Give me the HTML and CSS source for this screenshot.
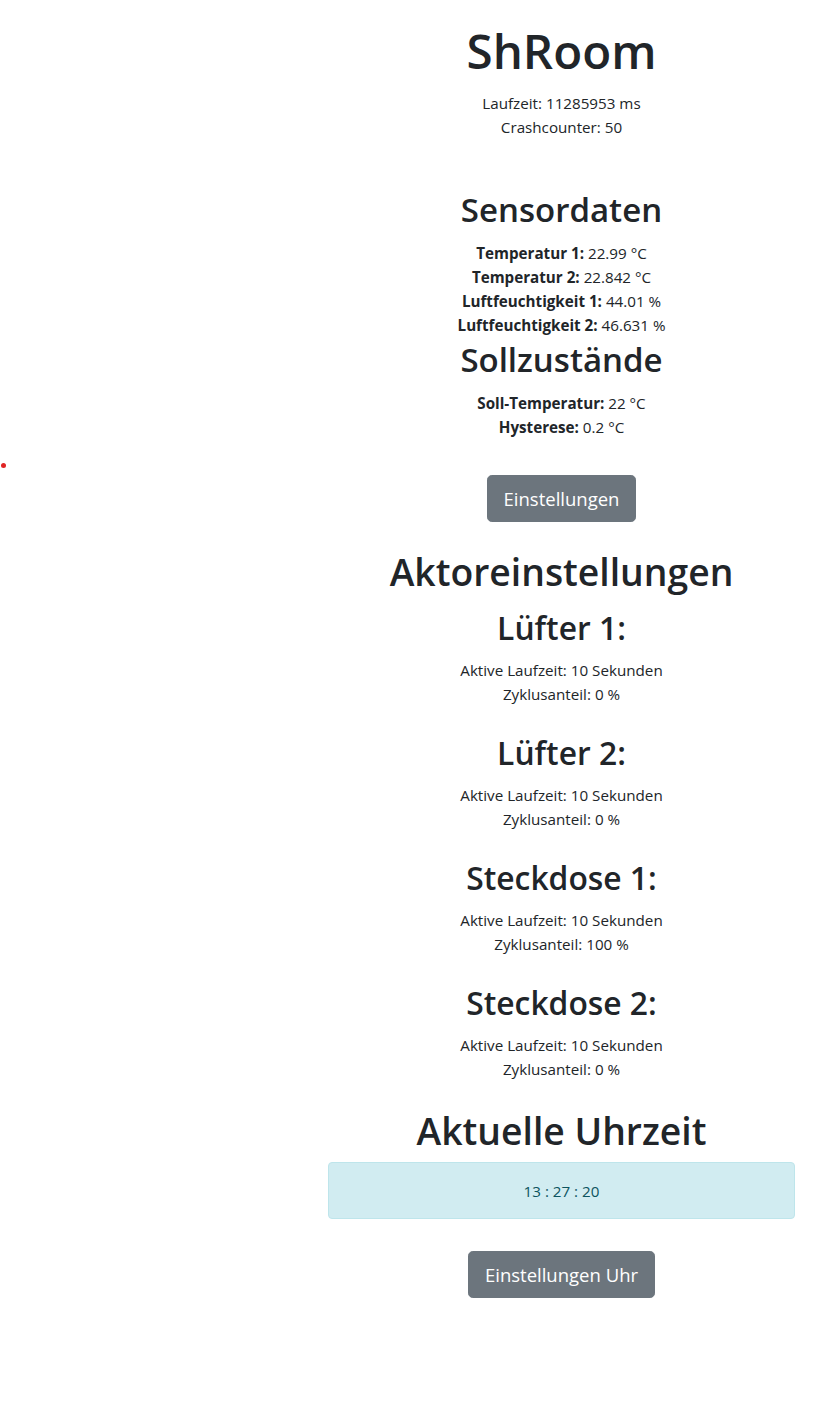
FILE: index.html
```html
<!DOCTYPE html>
<html lang="de">
<head>
<meta charset="utf-8">
<title>ShRoom</title>
<link rel="stylesheet" href="styles.css">
</head>
<body>
<span class="dot"></span>
<main class="main">
  <h1 class="title">ShRoom</h1>
  <p class="lines">Laufzeit: 11285953 ms<br>Crashcounter: 50</p>

  <h2 class="section sensor-head">Sensordaten</h2>
  <p class="lines">
    <b>Temperatur 1:</b> 22.99 °C<br>
    <b>Temperatur 2:</b> 22.842 °C<br>
    <b>Luftfeuchtigkeit 1:</b> 44.01 %<br>
    <b>Luftfeuchtigkeit 2:</b> 46.631 %
  </p>

  <h2 class="section soll-head">Sollzustände</h2>
  <p class="lines">
    <b>Soll-Temperatur:</b> 22 °C<br>
    <b>Hysterese:</b> 0.2 °C
  </p>

  <div class="btn-row first"><button class="btn">Einstellungen</button></div>

  <h2 class="big akt-head">Aktoreinstellungen</h2>

  <section class="actor first-actor">
    <h3 class="actor-head">Lüfter 1:</h3>
    <p class="lines">Aktive Laufzeit: 10 Sekunden<br>Zyklusanteil: 0 %</p>
  </section>
  <section class="actor">
    <h3 class="actor-head">Lüfter 2:</h3>
    <p class="lines">Aktive Laufzeit: 10 Sekunden<br>Zyklusanteil: 0 %</p>
  </section>
  <section class="actor">
    <h3 class="actor-head">Steckdose 1:</h3>
    <p class="lines">Aktive Laufzeit: 10 Sekunden<br>Zyklusanteil: 100 %</p>
  </section>
  <section class="actor">
    <h3 class="actor-head">Steckdose 2:</h3>
    <p class="lines">Aktive Laufzeit: 10 Sekunden<br>Zyklusanteil: 0 %</p>
  </section>

  <h2 class="big clock-head">Aktuelle Uhrzeit</h2>
  <div class="alert">13 : 27 : 20</div>

  <div class="btn-row last"><button class="btn">Einstellungen Uhr</button></div>
</main>
</body>
</html>
```

FILE: styles.css
```css
html, body {
  margin: 0;
  padding: 0;
  background: #fff;
}
body {
  font-family: "Open Sans", "Noto Sans", sans-serif;
  font-size: 15.2px;
  color: #212529;
  position: relative;
  min-height: 1426px;
}
.dot {
  position: absolute;
  left: 1px;
  top: 463px;
  width: 5px;
  height: 5px;
  border-radius: 50%;
  background: #e02424;
}
.main {
  width: 467px;
  margin-left: 328px;
  padding-top: 23px;
  text-align: center;
  display: flex;
  flex-direction: column;
}
h1, h2, h3, p { margin: 0; }
.title {
  font-size: 47.5px;
  font-weight: 600;
  line-height: 56px;
  margin-bottom: 12px;
}
.lines {
  line-height: 24px;
}
.lines b { font-weight: 700; }
.section {
  font-size: 33px;
  font-weight: 600;
  line-height: 44px;
  margin-bottom: 9px;
}
.sensor-head { margin-top: 49px; }
.soll-head { margin-top: 1px; }
.btn-row { display: flex; justify-content: center; }
.btn-row.first { margin-top: 36px; }
.btn-row.last { margin-top: 32px; }
.btn {
  font-family: inherit;
  font-size: 18.5px;
  line-height: 45px;
  height: 47px;
  padding: 0 16px;
  color: #fff;
  background: #6c757d;
  border: 1px solid #6c757d;
  border-radius: 4.8px;
}
.big {
  font-size: 37.3px;
  font-weight: 600;
  line-height: 44px;
}
.akt-head { margin-top: 28px; }
.clock-head { margin-top: 28px; margin-bottom: 9px; }
.actor { margin-top: 27px; }
.actor.first-actor { margin-top: 14px; }
.actor-head {
  font-size: 31.8px;
  font-weight: 600;
  line-height: 40px;
  margin-bottom: 10px;
}
.alert {
  height: 57px;
  box-sizing: border-box;
  display: flex;
  align-items: center;
  justify-content: center;
  color: #0c5460;
  background: #d1ecf1;
  border: 1px solid #bee5eb;
  border-radius: 4px;
  line-height: 24px;
}
```
